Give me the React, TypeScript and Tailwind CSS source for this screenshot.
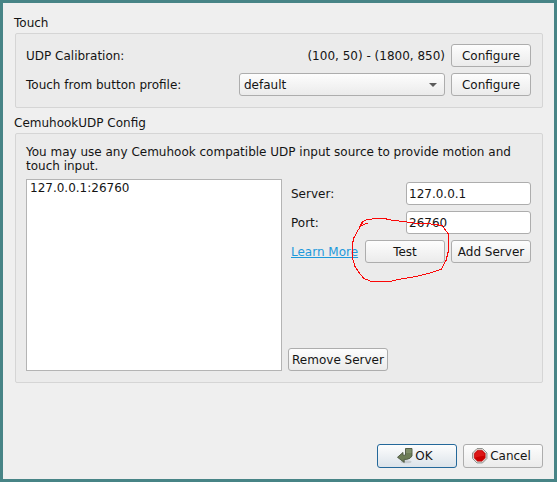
import type { ReactNode } from "react";

function Button({ children, className = "" }: { children: ReactNode; className?: string }) {
  return (
    <button
      className={`flex h-[23px] shrink-0 items-center justify-center whitespace-nowrap rounded-[3px] border border-[#adadad] bg-linear-to-b from-[#fdfdfd] to-[#ebebeb] leading-[14px] ${className}`}
    >
      {children}
    </button>
  );
}

function Field({ label, value }: { label: string; value: string }) {
  return (
    <div className="flex h-[23px] items-center justify-between">
      <label className="pl-[3px]">{label}</label>
      <input
        readOnly
        value={value}
        className="h-[23px] w-[125px] rounded-[3px] border border-[#adadad] bg-white px-[2px] leading-[14px] outline-none"
      />
    </div>
  );
}

function ReturnIcon() {
  return (
    <svg width="16" height="16" viewBox="0 0 16 16" className="mb-px shrink-0">
      <ellipse cx="9" cy="13.8" rx="5.5" ry="1.5" fill="#000" opacity=".12" />
      <path d="M8.500.5h6.500v7.500q-1.500 3-5.500 3.400H7.200v3L.5 9.300 6 4.400v2.800h2.500z" fill="#6d7d57" stroke="#4b5540" strokeWidth=".9" />
      <path d="M9 1h5.500v4H9z" fill="#7f8e69" />
    </svg>
  );
}

function StopIcon() {
  return (
    <svg width="16" height="16" viewBox="0 0 16 16" className="mb-px shrink-0">
      <path d="M5 .6h5.500L14.900 5v5.500L10.500 14.900H5L.6 10.500V5z" fill="#eeeeec" stroke="#888a85" />
      <path d="M5.400 2.200h4.700l3.200 3.200v4.700l-3.200 3.200H5.400l-3.200-3.200V5.400z" fill="#cc0000" stroke="#b01010" strokeWidth=".5" />
      <path d="M5.700 3h4.100L12.500 5.700v2Q7 8 3 9.800V5.700z" fill="#dc1616" />
    </svg>
  );
}

export default function App() {
  return (
    <div className="relative h-[482px] w-[557px] border-3 border-[#478486] bg-[#efefef] pt-[13px] pr-[11px] pl-[12px] font-['DejaVu_Sans',sans-serif] text-[12px] leading-[14px] text-[#141414]">
      <h2 className="-ml-px h-[17px]">Touch</h2>
      <section className="flex h-[75px] flex-col gap-[6px] rounded-[2px] border border-[#d5d5d5] bg-[#ebebeb] py-[10px] pr-[11px] pl-[10px]">
        <div className="flex items-center">
          <span className="flex-1">UDP Calibration:</span>
          <span className="mr-[6px]">(100, 50) - (1800, 850)</span>
          <Button className="w-20">Configure</Button>
        </div>
        <div className="flex items-center">
          <span className="flex-1">Touch from button profile:</span>
          <Button className="mr-[6px] w-[206px] justify-between! pr-[7px] pl-1">
            default
            <svg width="8" height="4" viewBox="0 0 8 4"><path d="M0 0h8L4 4z" fill="#5b5b5b" /></svg>
          </Button>
          <Button className="w-20">Configure</Button>
        </div>
      </section>
      <h2 className="-ml-px mt-2 h-[17px]">CemuhookUDP Config</h2>
      <section className="h-[250px] rounded-[2px] border border-[#d5d5d5] bg-[#ebebeb] pt-[11px] pr-[11px] pl-[10px]">
        <p className="h-[34px]">You may use any Cemuhook compatible UDP input source to provide motion and touch input.</p>
        <div className="flex h-48 gap-[6px]">
          <div className="w-64 border border-[#b4b4b4] bg-white px-[3px] pt-px">127.0.0.1:26760</div>
          <div className="flex flex-1 flex-col pt-[3px]">
            <div className="flex flex-col gap-[6px]">
              <Field label="Server:" value="127.0.0.1" />
              <Field label="Port:" value="26760" />
              <div className="flex items-center gap-[6px]">
                <a className="flex-1 whitespace-nowrap pl-[3px] text-[#1d99dc] underline">Learn More</a>
                <Button className="w-20">Test</Button>
                <Button className="w-20">Add Server</Button>
              </div>
            </div>
            <Button className="mt-auto w-[100px]">Remove Server</Button>
          </div>
        </div>
      </section>
      <footer className="mt-[61px] flex justify-end gap-[6px]">
        <Button className="h-6! w-20 gap-[2px] border-[#24689a]! to-[#dce3ea]! pr-[4px]">
          <ReturnIcon />
          OK
        </Button>
        <Button className="h-6! w-20 gap-[2px] pr-[3px]">
          <StopIcon />
          Cancel
        </Button>
      </footer>
      <svg className="pointer-events-none absolute -top-[3px] -left-[3px]" width="557" height="482" fill="none" stroke="#fb0707" strokeWidth="1" shapeRendering="crispEdges">
        <path d="M368.500 223.500L365 224l-5 2.500 2.500-5 5-2 9-1 10 .5 7 1.500 10 1 10 1.500 12 .5 11 1 6 1.500 3 4 2.500 3.500v19l-2 8-4.500 8.500-10 3.500-15 4-18 3-9 2h-18l-7.500-3-4-4.500-5-7.500-2.500-8v-15l1.500-6 4.500-8 3-4.500 1-2" />
      </svg>
    </div>
  );
}
